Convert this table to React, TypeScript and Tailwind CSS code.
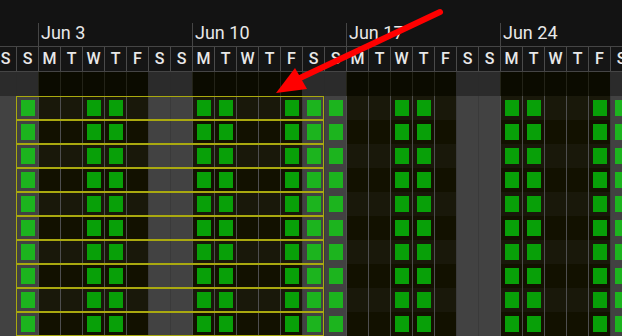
import React from 'react';

// 2-2-3 rotation, starting Sunday Jun 2
const PATTERN = [1, 0, 0, 1, 1, 0, 0, 0, 1, 1, 0, 0, 1, 1];
const LETTERS = 'SSMTWTF';
const COLS = Array.from({ length: 29 }, (_, k) => ({
  letter: LETTERS[k % 7],
  weekend: k % 7 < 2,
  shift: k > 0 && PATTERN[(k - 1) % 14] === 1,
}));
const WEEKS = ['Jun 3', 'Jun 10', 'Jun 17', 'Jun 24'];
const ROWS = Array.from({ length: 10 }, (_, i) => i);

function Cell({ col, row }: { col: (typeof COLS)[number]; row: number }) {
  const bg = col.weekend
    ? 'bg-[#424242] border-[#3a3a3a]'
    : row % 2 === 0
      ? 'bg-[#19180a] border-[#4e4e4e]'
      : 'bg-[#121100] border-[#4e4e4e]';
  return (
    <div className={`flex h-[24px] w-[22px] shrink-0 items-center justify-center border-l ${bg}`}>
      {col.shift && (
        <div className={`h-[16px] w-[14px] ${col.weekend ? 'bg-[#1cb41e]' : 'bg-[#08a008]'}`} />
      )}
    </div>
  );
}

export default function App() {
  return (
    <div className="relative h-[336px] w-[622px] overflow-hidden bg-[#131313] font-['Roboto',sans-serif] text-[#e8e8e8]">
      <div className="ml-[-6px] flex w-[650px] flex-col">
        {/* month / week labels */}
        <div className="flex h-[46px] items-end">
          <div className="w-[44px] shrink-0" />
          {WEEKS.map((w) => (
            <div
              key={w}
              className="h-[23px] w-[154px] shrink-0 border-l border-[#454545] pl-[2px] pt-[1px] text-[18px] leading-[18px]"
            >
              {w}
            </div>
          ))}
        </div>

        {/* day letters */}
        <div className="flex border-y border-[#454545] bg-[#151515]">
          {COLS.map((c, k) => (
            <div
              key={k}
              className="flex h-[24px] w-[22px] shrink-0 items-center justify-center border-l border-[#4a4a4a] text-[16px] font-medium leading-none"
            >
              {c.letter}
            </div>
          ))}
        </div>

        {/* summary row */}
        <div className="flex">
          {COLS.map((c, k) => (
            <div
              key={k}
              className={`h-[24px] w-[22px] shrink-0 border-l ${
                c.weekend ? 'border-[#2a2a2a] bg-[#2b2b2b]' : 'border-[#232318] bg-[#0b0b00]'
              }`}
            />
          ))}
        </div>

        {/* schedule rows */}
        {ROWS.map((r) => (
          <div key={r} className="flex">
            <Cell col={COLS[0]} row={r} />
            <div className="flex outline outline-1 -outline-offset-1 outline-[#a9a90f]">
              {COLS.slice(1, 15).map((c, k) => (
                <Cell key={k} col={c} row={r} />
              ))}
            </div>
            {COLS.slice(15).map((c, k) => (
              <Cell key={k} col={c} row={r} />
            ))}
          </div>
        ))}
      </div>

      {/* annotation arrow */}
      <svg className="pointer-events-none absolute left-0 top-0" width="622" height="336">
        <line x1="440" y1="12" x2="300" y2="78" stroke="#ff0000" strokeWidth="6" strokeLinecap="round" />
        <polygon points="276,93 295,68 307,89" fill="#ff0000" />
      </svg>
    </div>
  );
}
